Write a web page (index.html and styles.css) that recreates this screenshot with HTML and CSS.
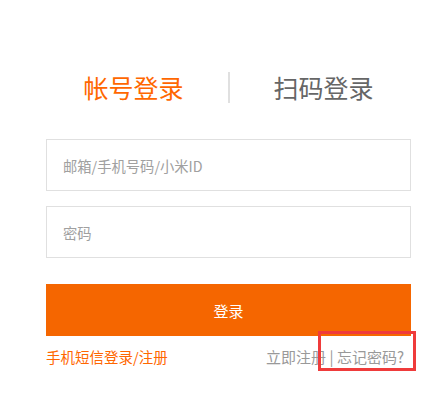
FILE: index.html
```html
<!DOCTYPE html>
<html lang="zh-CN">
<head>
<meta charset="utf-8">
<title>登录</title>
<link rel="stylesheet" href="styles.css">
</head>
<body>
<div class="login">
  <div class="tabs">
    <span class="tab active">帐号登录</span>
    <span class="divider"></span>
    <span class="tab">扫码登录</span>
  </div>
  <form class="form">
    <div class="field"><input class="input" type="text" placeholder="邮箱/手机号码/小米ID"></div>
    <div class="field"><input class="input" type="password" placeholder="密码"></div>
    <button class="btn" type="button">登录</button>
  </form>
  <div class="links">
    <a class="sms">手机短信登录/注册</a>
    <span class="right">立即注册 | 忘记密码?</span>
    <span class="highlight"></span>
  </div>
</div>
</body>
</html>
```
FILE: styles.css
```css
html, body {
  margin: 0;
  padding: 0;
  background: #fff;
}
body {
  font-family: "Noto Sans CJK SC", "Noto Sans", sans-serif;
}
.login {
  width: 365px;
  margin-left: 46px;
  padding-top: 72px;
  padding-bottom: 40px;
}
.tabs {
  display: flex;
  justify-content: center;
  align-items: center;
  gap: 44px;
  height: 31px;
}
.tab {
  font-size: 25px;
  line-height: 31px;
  color: #666;
}
.tab.active {
  color: #ff6700;
}
.divider {
  width: 2px;
  height: 31px;
  background: #e0e0e0;
}
.form {
  margin: 36px 0 0;
  display: flex;
  flex-direction: column;
  gap: 15px;
}
.field {
  height: 52px;
  box-sizing: border-box;
  border: 1px solid #e0e0e0;
}
.input {
  width: 100%;
  height: 100%;
  box-sizing: border-box;
  border: 0;
  outline: none;
  padding: 0 16px;
  font-family: inherit;
  font-size: 14.3px;
  color: #333;
  background: transparent;
}
.input::placeholder {
  color: #a0a0a0;
}
.btn {
  margin-top: 11px;
  height: 52px;
  border: 0;
  background: #f56600;
  color: #fff;
  font-family: inherit;
  font-size: 15px;
  padding: 0;
}
.links {
  position: relative;
  margin-top: 11px;
  display: flex;
  justify-content: space-between;
  align-items: center;
  height: 20px;
  line-height: 20px;
}
.sms {
  color: #ff6700;
  font-size: 14.5px;
}
.right {
  color: #999;
  font-size: 15px;
  margin-right: 7px;
}
.highlight {
  position: absolute;
  left: 272px;
  top: -16px;
  width: 98px;
  height: 40px;
  box-sizing: border-box;
  border: 3px solid #ef3b3b;
}
```
